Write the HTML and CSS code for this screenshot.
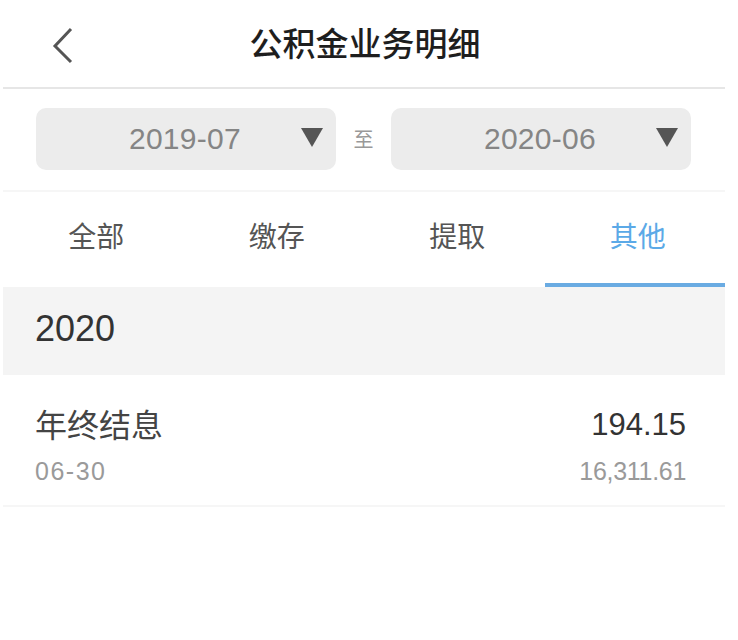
FILE: index.html
```html
<!DOCTYPE html>
<html lang="zh-CN">
<head>
<meta charset="utf-8">
<title>公积金业务明细</title>
<link rel="stylesheet" href="styles.css">
</head>
<body>
<div class="page">
  <header class="nav">
    <button class="back" aria-label="返回">
      <svg width="24" height="40" viewBox="0 0 24 40"><path d="M19 3 L3 20 L19 36" fill="none" stroke="#555" stroke-width="3"/></svg>
    </button>
    <h1 class="title">公积金业务明细</h1>
  </header>

  <div class="filter">
    <div class="picker">
      <span class="picker-value">2019-07</span>
      <span class="caret"></span>
    </div>
    <span class="to">至</span>
    <div class="picker">
      <span class="picker-value">2020-06</span>
      <span class="caret"></span>
    </div>
  </div>

  <nav class="tabs">
    <div class="tab">全部</div>
    <div class="tab">缴存</div>
    <div class="tab">提取</div>
    <div class="tab active">其他</div>
  </nav>

  <div class="year">2020</div>

  <div class="record">
    <div class="record-line">
      <span class="record-name">年终结息</span>
      <span class="record-amount">194.15</span>
    </div>
    <div class="record-line">
      <span class="record-date">06-30</span>
      <span class="record-balance">16,311.61</span>
    </div>
  </div>
</div>
</body>
</html>
```

FILE: styles.css
```css
* { box-sizing: border-box; }
html, body { margin: 0; padding: 0; background: #fff; }
body {
  font-family: "Liberation Sans", "Noto Sans CJK SC", sans-serif;
  color: #333;
}
.page {
  width: 722px;
  margin-left: 3px;
}
.nav {
  position: relative;
  height: 89px;
  display: flex;
  align-items: center;
  justify-content: center;
  border-bottom: 2px solid #e6e6e6;
}
.back {
  position: absolute;
  left: 49px;
  top: 26px;
  padding: 0;
  border: 0;
  background: none;
  line-height: 0;
}
.title {
  margin: 0;
  font-family: "Noto Sans CJK SC", sans-serif;
  font-size: 33px;
  font-weight: 500;
  color: #1e1e1e;
  padding-bottom: 4px;
  margin-left: 2px;
}
.filter {
  height: 103px;
  display: flex;
  align-items: flex-start;
  padding: 19px 34px 0 33px;
  border-bottom: 2px solid #f6f6f6;
}
.picker {
  width: 300px;
  height: 62px;
  background: #ececec;
  border-radius: 10px;
  display: flex;
  align-items: center;
  justify-content: center;
  position: relative;
}
.picker-value {
  font-size: 30px;
  color: #858585;
  letter-spacing: 0.3px;
  padding-right: 2px;
}
.caret {
  position: absolute;
  right: 13px;
  top: 20px;
  width: 0;
  height: 0;
  border-left: 11px solid transparent;
  border-right: 11px solid transparent;
  border-top: 19px solid #555;
}
.to {
  width: 55px;
  text-align: center;
  font-family: "Noto Sans CJK SC", sans-serif;
  font-size: 20px;
  color: #999;
  line-height: 62px;
}
.tabs {
  display: grid;
  grid-template-columns: repeat(4, 1fr);
  height: 95px;
}
.tab {
  display: flex;
  align-items: center;
  justify-content: center;
  font-family: "Noto Sans CJK SC", sans-serif;
  font-size: 28px;
  color: #555;
  padding-left: 6px;
  padding-bottom: 5px;
  border-bottom: 4px solid transparent;
}
.tab.active {
  color: #5ba9e7;
  border-bottom-color: #6aabe2;
}
.year {
  height: 88px;
  background: #f4f4f4;
  display: flex;
  align-items: center;
  padding-left: 32px;
  font-size: 36px;
  color: #333;
  padding-bottom: 4px;
}
.record {
  height: 132px;
  padding: 26px 39px 0 32px;
  border-bottom: 2px solid #f6f6f6;
}
.record-line {
  display: flex;
  justify-content: space-between;
  align-items: center;
}
.record-line + .record-line { margin-top: 10px; }
.record-name {
  font-family: "Noto Sans CJK SC", sans-serif;
  font-size: 32px;
  color: #444;
  line-height: 44px;
}
.record-amount {
  font-size: 31px;
  color: #333;
  padding-top: 4px;
}
.record-date, .record-balance {
  font-size: 25px;
  color: #9a9a9a;
  line-height: 32px;
}
.record-date { letter-spacing: 1.5px; }
.record-balance { letter-spacing: -0.3px; }
```
